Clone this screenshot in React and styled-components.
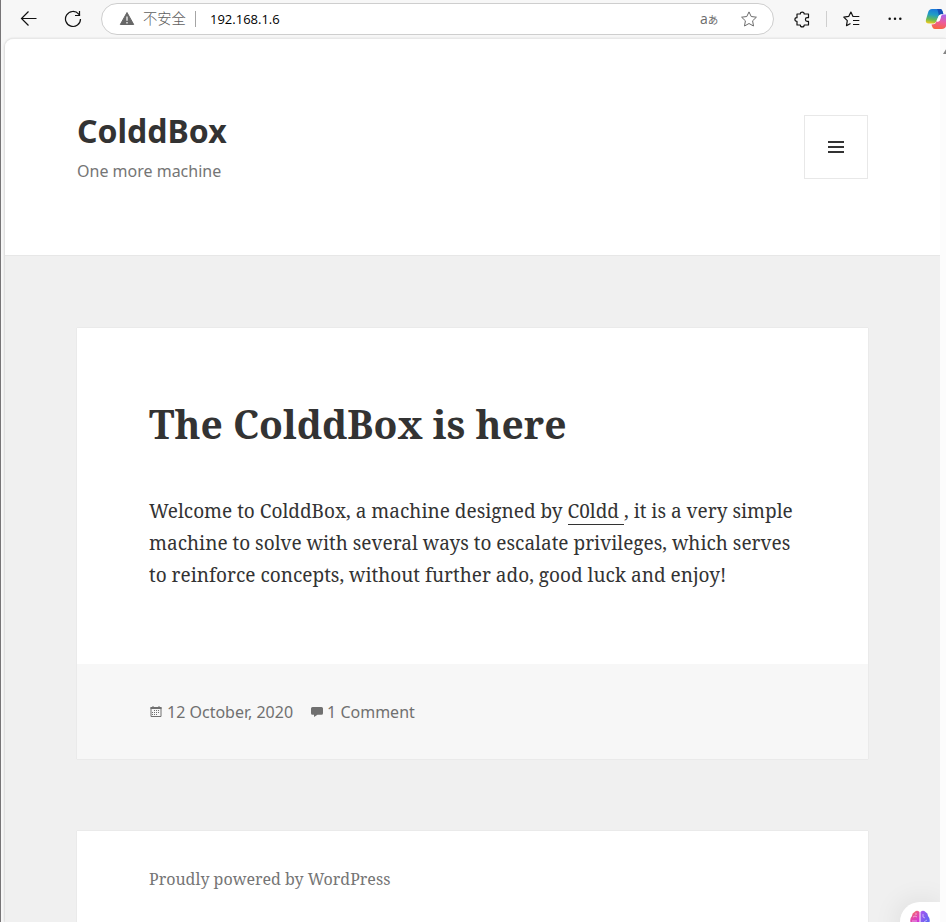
import React from "react";
import styled, { createGlobalStyle } from "styled-components";

const GlobalStyle = createGlobalStyle`
  *, *::before, *::after { box-sizing: border-box; }
  body { margin: 0; overflow: hidden; background: #f7f7f7; }
  svg { display: block; flex: none; }
  h1, h2, p { margin: 0; }
`;

const Window = styled.div`
  width: 946px;
  height: 922px;
  overflow: hidden;
  display: flex;
  flex-direction: column;
  background: #f7f7f7;
  border-left: 1px solid #777577;
`;

const Toolbar = styled.div`
  height: 38px;
  flex: none;
  display: flex;
  align-items: center;
  color: #111;
`;

const ToolButton = styled.button`
  border: 0;
  padding: 0;
  background: none;
  color: inherit;
  flex: none;
  display: flex;
  margin-left: ${(p) => p.$gap || 0}px;
`;

const AddressBar = styled.div`
  width: 673px;
  height: 32px;
  margin-left: 19px;
  flex: none;
  display: flex;
  align-items: center;
  border: 1px solid #cecece;
  border-radius: 16px;
  background: #fff;
  color: #6b6b6b;
  padding-left: 17px;
`;

const Warning = styled.span`
  margin-left: 8px;
  width: 43px;
  margin-top: -2px;
  white-space: nowrap;
  font: 300 14.3px/20px "Noto Sans CJK SC", sans-serif;
  color: #606060;
`;

const Divider = styled.span`
  width: 1px;
  height: 16px;
  margin-left: ${(p) => p.$gap}px;
  background: ${(p) => p.$color};
  flex: none;
`;

const Url = styled.span`
  margin-left: 14px;
  flex: 1;
  font: 13px/20px "Open Sans", sans-serif;
  color: #000;
`;

const Translate = styled.span`
  display: flex;
  align-items: baseline;
  height: 19px;
  width: 19px;
  white-space: nowrap;
  font: 14px/17px "Open Sans", sans-serif;
  color: #6b6b6b;
`;

const Kana = styled.span`
  font: 10.5px/17px "Noto Sans CJK JP", sans-serif;
`;

const Frame = styled.div`
  flex: 1;
  min-height: 0;
  margin-left: 4px;
  display: flex;
  border-top: 1px solid #e8e8e8;
  border-top-left-radius: 9px;
  box-shadow: -1px 0 2px rgba(0, 0, 0, 0.12);
  overflow: hidden;
  background: #fcfcfc;
`;

const Page = styled.div`
  width: 935px;
  flex: none;
  display: flex;
  flex-direction: column;
  background: #f0f0f0;
  overflow: hidden;
`;

const Scrollbar = styled.div`
  width: 6px;
  padding: 9px 0 0 2px;
  overflow: hidden;
`;

const Header = styled.header`
  height: 217px;
  flex: none;
  display: flex;
  justify-content: space-between;
  align-items: flex-start;
  padding: 76px 72px 0;
  background: #fff;
  border-bottom: 1px solid #e7e7e7;
`;

const SiteTitle = styled.h1`
  margin-top: -6px;
  font: bold 32px/43px "Noto Sans", sans-serif;
  color: #333;
`;

const Tagline = styled.p`
  margin-top: 7px;
  font: 16px/24px "Noto Sans", sans-serif;
  color: #757575;
`;

const MenuButton = styled.button`
  width: 64px;
  height: 64px;
  display: flex;
  align-items: center;
  justify-content: center;
  border: 1px solid #e8e8e8;
  background: #fff;
  padding: 0;
`;

const Card = styled.article`
  width: 791px;
  flex: none;
  margin: 72px 0 0 72px;
  background: #fff;
  box-shadow: 0 0 1px rgba(0, 0, 0, 0.15);
`;

const CardBody = styled.div`
  height: 336px;
  padding: 72px 72px 0;
`;

const PostTitle = styled.h2`
  font: bold 39px/47px "Noto Serif", serif;
  color: #333;
`;

const PostText = styled.p`
  margin-top: 48px;
  font: 19px/32px "Noto Serif", serif;
  color: #333;
  white-space: nowrap;
`;

const TextLink = styled.a`
  color: #333;
  border-bottom: 1px solid #333;
  text-decoration: none;
  white-space: pre;
`;

const Meta = styled.footer`
  height: 95px;
  display: flex;
  align-items: center;
  padding: 1px 72px 0;
  background: #f7f7f7;
  font: 16px/24px "Noto Sans", sans-serif;
  color: #707070;
`;

const MetaItem = styled.span`
  display: flex;
  align-items: center;
  gap: ${(p) => p.$gap}px;
  margin-right: 17px;
`;

const SiteInfo = styled.footer`
  width: 791px;
  height: 96px;
  flex: none;
  margin: 72px 0 0 72px;
  padding: 36px 72px;
  background: #fff;
  box-shadow: 0 0 1px rgba(0, 0, 0, 0.15);
  font: 16px/24px "Noto Serif", serif;
  color: #757575;
`;

/* Assistant badge floating above the page's lower right corner */
const Assistant = styled.div`
  position: fixed;
  left: 900px;
  top: 902px;
  width: 40px;
  height: 40px;
  padding: 8px 0 0 10px;
  border-radius: 20px 0 0 20px;
  background: #fff;
  box-shadow: -2px 0 28px rgba(0, 0, 0, 0.09);
  clip-path: inset(-50px 0 0 -50px);
`;

const BackIcon = () => (
  <svg width="18" height="18" viewBox="0 0 18 18" fill="none" stroke="currentColor" strokeWidth="1.2">
    <path d="M16.5 8.5H1.5M8.500 1.500 1.500 8.500 8.500 15.500" />
  </svg>
);

const ReloadIcon = () => (
  <svg width="18" height="18" viewBox="0 0 18 18" fill="none" stroke="currentColor" strokeWidth="1.2">
    <path d="M16.500 9a7.500 7.500 0 1 1-1.800-4.900L16 5.500M15.500 1v4.500h-4.500" />
  </svg>
);

const WarnIcon = () => (
  <svg width="16" height="14" viewBox="0 0 16 14">
    <path d="M8 .5 14.700 12.500H1.300Z" fill="#676767" stroke="#676767" strokeLinejoin="round" />
    <path d="M8 4.500v4.300M8 10v1.400" stroke="#fff" strokeWidth="1.2" />
  </svg>
);

const starPath = "M8 .9 10.2 5.5 15.4 6.2 11.6 9.8 12.5 15 8 12.5 3.5 15 4.4 9.8.6 6.2 5.8 5.5Z";

const StarIcon = () => (
  <svg width="16" height="16" viewBox="0 0 16 16" fill="none" stroke="#6b6b6b" strokeLinejoin="round">
    <path d={starPath} />
  </svg>
);

const PuzzleIcon = () => (
  <svg width="16" height="17" viewBox="0 0 16 17" fill="none" stroke="currentColor" strokeWidth="1.2" strokeLinejoin="round">
    <path d="M3 3h3.300C6.300.4 10.200.4 10.200 3h4.300v3.700h-1.300c-2.400 0-2.400 3.700 0 3.700h1.300V14h-4.300c0 2.600-3.900 2.600-3.900 0H3v-3.600C.2 10.400.2 6.700 3 6.700Z" />
  </svg>
);

const FavoritesIcon = () => (
  <svg width="17" height="16" viewBox="0 0 17 16" fill="none" stroke="currentColor" strokeWidth="1.2" strokeLinejoin="round">
    <path d="M10.8 5.5 10 5.4 7.9 1 5.7 5.4.8 6.1l3.5 3.5L3.5 14.7 7.500 12.500M9.800 5.500H16.300M10 9.500h6.300M10 13.500h6.300" />
  </svg>
);

const MoreIcon = () => (
  <svg width="14" height="4" viewBox="0 0 14 4" fill="currentColor">
    <circle cx="1.700" cy="1.800" r="1.250" />
    <circle cx="7" cy="1.800" r="1.250" />
    <circle cx="12.300" cy="1.800" r="1.250" />
  </svg>
);

const CopilotIcon = () => (
  <svg width="24" height="22" viewBox="0 0 24 22">
    <defs>
      <linearGradient id="cpA" x1=".5" y1="0" x2=".3" y2="1">
        <stop offset="0" stopColor="#1877dc" />
        <stop offset=".4" stopColor="#219ec2" />
        <stop offset=".72" stopColor="#66b955" />
        <stop offset="1" stopColor="#f0ca1e" />
      </linearGradient>
      <linearGradient id="cpB" x1=".6" y1="0" x2=".35" y2="1">
        <stop offset="0" stopColor="#a866ee" />
        <stop offset=".5" stopColor="#ed5b9b" />
        <stop offset="1" stopColor="#f8653e" />
      </linearGradient>
    </defs>
    <path d="M16.500 6.500h4c3 0 3.700 1.300 3 4l-2.200 7c-.8 2.500-2 3.500-4.500 3.500H10c-2 0-2.800-1.800-3.500-4.500 3.200 0 4.500-1 5.200-3.500 2 .7 3-.3 3.500-2.500Z" fill="url(#cpB)" />
    <path d="M7 1h8c2 0 2.700 2 3.300 5-3-.2-4.600.8-5.400 3.400L11.300 13c-.6 2-1.800 2.600-4 2.600H4c-2.800 0-3.700-1.600-3-4.100l2-6.800C3.700 2.200 4.800 1 7 1Z" fill="url(#cpA)" />
    <path d="M12 1h3c2 0 2.700 2 3.300 5-2.200-.1-3.600.3-4.500 1.500C13.500 5 13 2.500 12 1Z" fill="#1450b5" />
    <path d="M14 7.800c1.200-1.100 2.200-1.300 3.300-1.300-1 .5-1.300 2.200-1.800 4.200-.6 2.300-1.500 3.200-3.600 3 .5-2 1.200-4.500 2.100-5.900Z" fill="#fff" />
  </svg>
);

const ScrollArrow = () => (
  <svg width="10" height="7" viewBox="0 0 10 7" fill="#858585">
    <path d="M1 6 4 1.200Q5 0 6 1.200L9 6Z" />
  </svg>
);

const MenuIcon = () => (
  <svg width="16" height="12" viewBox="0 0 16 12" fill="#333">
    <path d="M0 0h16v2H0zM0 5h16v2H0zM0 10h16v2H0z" />
  </svg>
);

const CalendarIcon = () => (
  <svg width="13" height="12" viewBox="0 0 13 12">
    <path d="M2 1.500h10v9H2z" fill="none" stroke="#707070" />
    <path d="M1.500 1h11v2h-11zM3.500 0h1v1h-1zM9.500 0h1v1h-1z" fill="#707070" />
    <path d="M5 4h1v1H5zM7 4h1v1H7zM9 4h1v1H9zM3 6h1v1H3zM5 6h1v1H5zM7 6h1v1H7zM9 6h1v1H9zM3 8h1v1H3zM5 8h1v1H5zM7 8h1v1H7z" fill="#707070" />
  </svg>
);

const CommentIcon = () => (
  <svg width="13" height="10" viewBox="0 0 13 10" fill="#707070">
    <path d="M2.500 0h9A1.500 1.500 0 0 1 13 1.500v4.700a1.500 1.500 0 0 1-1.500 1.500H7.500L4 10V7.700H2.500A1.500 1.500 0 0 1 1 6.200V1.500A1.500 1.500 0 0 1 2.500 0Z" />
  </svg>
);

const BrainIcon = () => (
  <svg width="20" height="20" viewBox="0 0 20 20">
    <defs>
      <linearGradient id="brL" x1="0" y1="0" x2=".4" y2="1">
        <stop offset="0" stopColor="#ff9243" />
        <stop offset=".38" stopColor="#e84f9b" />
        <stop offset="1" stopColor="#c52ff0" />
      </linearGradient>
      <linearGradient id="brR" x1="0" y1="0" x2="1" y2="1">
        <stop offset="0" stopColor="#ad55ef" />
        <stop offset="1" stopColor="#436cf4" />
      </linearGradient>
    </defs>
    <path d="M9.500 2Q7-.6 4.500 2 2 3 2 6 0 8 .3 11q0 4 3.200 5.500Q6 20 9.500 17Z" fill="url(#brL)" />
    <path d="M10.500 2Q13-.6 15.500 2 18 3 18 6q2 2 1.700 5 0 4-3.200 5.500-2.500 3.500-6 .5Z" fill="url(#brR)" />
    <path d="M3 7q2-2 4 0M2 11h5M6 3v2M13 4v3l2 1M14 12l3-2" fill="none" stroke="#fff" strokeOpacity=".5" />
  </svg>
);

export default function App() {
  return (
    <Window>
      <GlobalStyle />
      <Toolbar>
        <ToolButton $gap={19} aria-label="Back"><BackIcon /></ToolButton>
        <ToolButton $gap={26} aria-label="Reload"><ReloadIcon /></ToolButton>
        <AddressBar>
          <WarnIcon />
          <Warning>不安全</Warning>
          <Divider $gap={9} $color="#a5a5a5" />
          <Url>192.168.1.6</Url>
          <Translate>a<Kana>あ</Kana></Translate>
          <ToolButton $gap={22} aria-label="Add to favorites"><StarIcon /></ToolButton>
          <Divider $gap={15} $color="transparent" />
        </AddressBar>
        <ToolButton $gap={20} aria-label="Extensions"><PuzzleIcon /></ToolButton>
        <Divider $gap={16} $color="#cfcfcf" />
        <ToolButton $gap={16} aria-label="Favorites"><FavoritesIcon /></ToolButton>
        <ToolButton $gap={28} aria-label="More"><MoreIcon /></ToolButton>
        <ToolButton $gap={23} aria-label="Copilot"><CopilotIcon /></ToolButton>
      </Toolbar>
      <Frame>
        <Page>
          <Header>
            <div>
              <SiteTitle>ColddBox</SiteTitle>
              <Tagline>One more machine</Tagline>
            </div>
            <MenuButton aria-label="Menu"><MenuIcon /></MenuButton>
          </Header>
          <Card>
            <CardBody>
              <PostTitle>The ColddBox is here</PostTitle>
              <PostText>
                Welcome to ColddBox, a machine designed by <TextLink>{"C0ldd "}</TextLink>, it is a very simple
                <br />
                machine to solve with several ways to escalate privileges, which serves
                <br />
                to reinforce concepts, without further ado, good luck and enjoy!
              </PostText>
            </CardBody>
            <Meta>
              <MetaItem $gap={5}><CalendarIcon />12 October, 2020</MetaItem>
              <MetaItem $gap={4}><CommentIcon />1 Comment</MetaItem>
            </Meta>
          </Card>
          <SiteInfo>Proudly powered by WordPress</SiteInfo>
        </Page>
        <Scrollbar><ScrollArrow /></Scrollbar>
      </Frame>
      <Assistant><BrainIcon /></Assistant>
    </Window>
  );
}
